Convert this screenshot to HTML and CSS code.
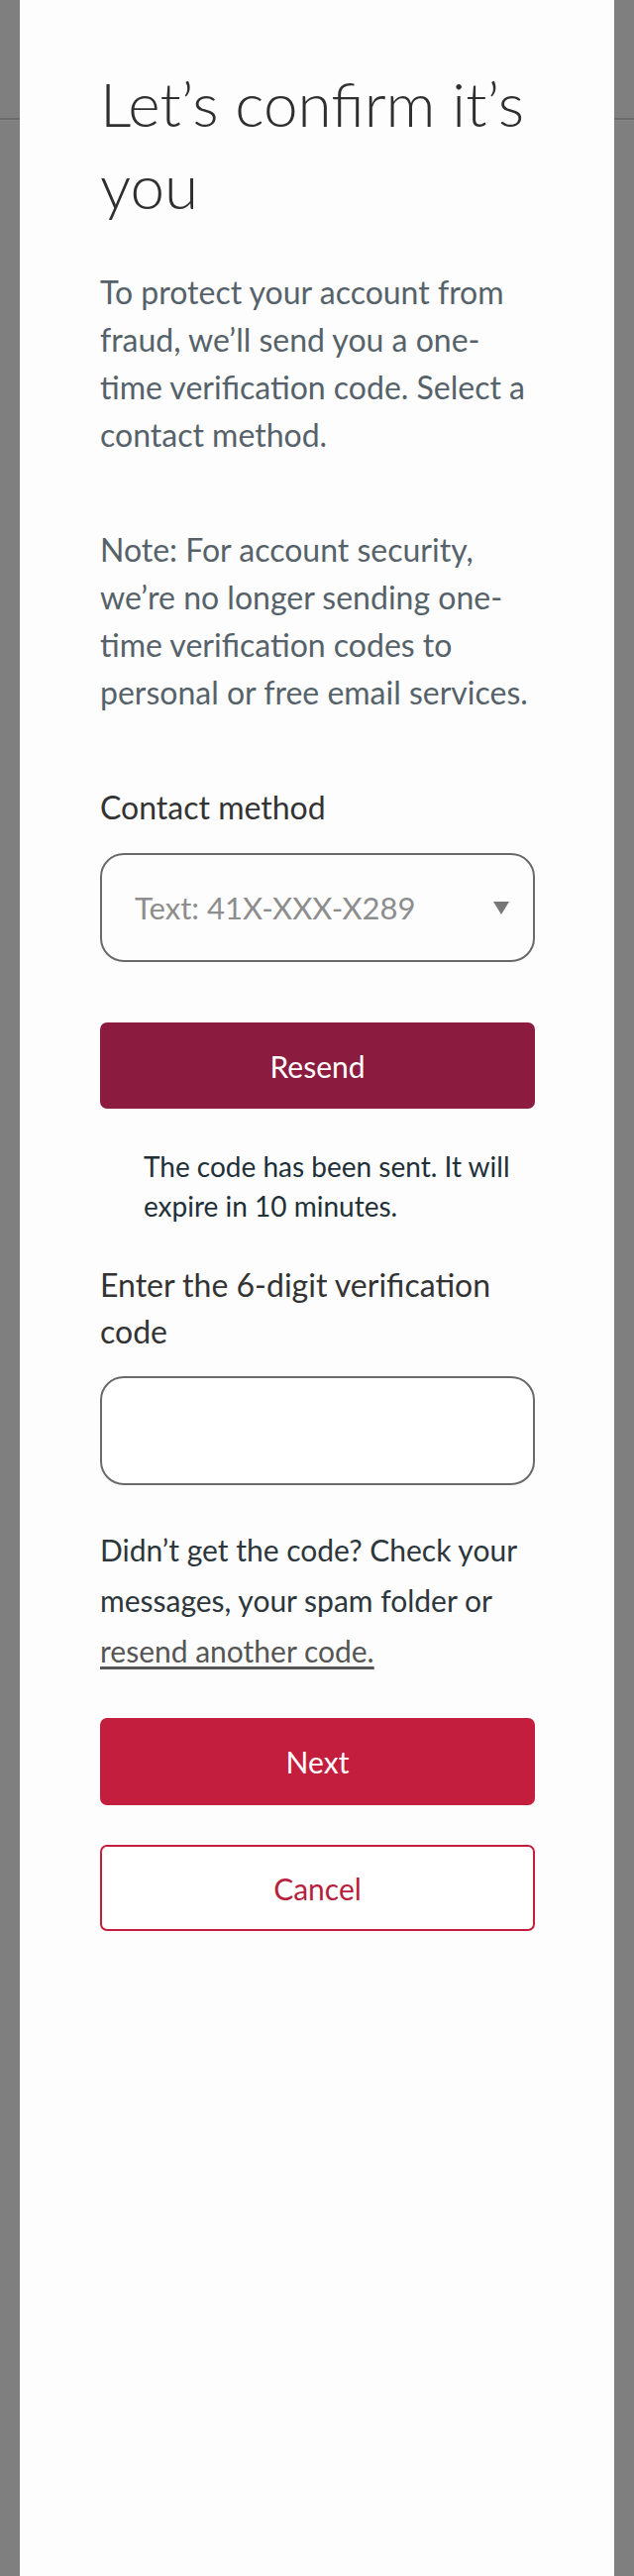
FILE: index.html
```html
<!DOCTYPE html>
<html lang="en">
<head>
<meta charset="utf-8">
<title>Let’s confirm it’s you</title>
<link rel="stylesheet" href="styles.css">
</head>
<body>
<div class="backdrop">
  <main class="panel">
    <h1 class="title">Let’s confirm it’s you</h1>
    <p class="intro">To protect your account from fraud, we’ll send you a one-time verification code. Select a contact method.</p>
    <p class="note">Note: For account security, we’re no longer sending one-time verification codes to personal or free email services.</p>

    <label class="field-label" for="method">Contact method</label>
    <div class="select">
      <span class="select-value" id="method">Text: 41X-XXX-X289</span>
      <span class="select-caret" aria-hidden="true"></span>
    </div>

    <button class="btn btn-resend" type="button">Resend</button>

    <p class="sent-msg">The code has been sent. It will expire in 10 minutes.</p>

    <label class="field-label field-label-code" for="code">Enter the 6-digit verification code</label>
    <input class="code-input" id="code" type="text">

    <p class="help">Didn’t get the code? Check your messages, your spam folder or <a class="help-link" href="#">resend another code.</a></p>

    <button class="btn btn-next" type="button">Next</button>
    <button class="btn btn-cancel" type="button">Cancel</button>
  </main>
</div>
</body>
</html>
```
FILE: styles.css
```css
html, body {
  margin: 0;
  padding: 0;
}
body {
  background-color: #7f7f7f;
  background-image: linear-gradient(to bottom, transparent 119px, #6b6b6b 119px, #6b6b6b 121px, #858585 121px, #858585 122px, transparent 122px);
  font-family: Lato, "Liberation Sans", sans-serif;
  min-height: 2600px;
}
.backdrop {
  padding: 0 20px;
}
.panel {
  background: #fdfdfd;
  min-height: 2600px;
  box-sizing: border-box;
  padding: 63px 80px 40px 81px;
  display: flex;
  flex-direction: column;
}
.title {
  margin: 0;
  font-weight: 300;
  font-size: 62px;
  line-height: 83px;
  color: #2f2f2f;
}
.intro, .note {
  margin: 42px 0 0;
  font-size: 32px;
  line-height: 48px;
  color: #56626a;
  font-weight: 400;
}
.note {
  margin-top: 68px;
}
.field-label {
  display: block;
  margin-top: 68px;
  font-size: 32px;
  line-height: 48px;
  color: #333;
}
.select {
  margin-top: 22px;
  height: 110px;
  box-sizing: border-box;
  border: 2px solid #6a6a6a;
  border-radius: 24px;
  display: flex;
  align-items: center;
  justify-content: space-between;
  padding: 0 24px 0 33px;
}
.select-value {
  font-size: 31px;
  color: #8d8d8d;
}
.select-caret {
  width: 0;
  height: 0;
  border-left: 8.5px solid transparent;
  border-right: 8.5px solid transparent;
  border-top: 13px solid #777;
}
.btn {
  display: block;
  width: 100%;
  box-sizing: border-box;
  border-radius: 7px;
  font-family: inherit;
  font-size: 30px;
  padding: 0;
  cursor: pointer;
}
.btn-resend {
  margin-top: 61px;
  height: 87px;
  border: none;
  background: #8b1c3f;
  color: #fff;
}
.sent-msg {
  margin: 38px 0 0;
  padding: 0 0 0 44px;
  font-size: 28px;
  line-height: 40px;
  color: #1f3038;
}
.field-label-code {
  margin-top: 36px;
  line-height: 47px;
}
.code-input {
  display: block;
  margin: 22px 0 0;
  width: 100%;
  height: 110px;
  box-sizing: border-box;
  border: 2px solid #6a6a6a;
  border-radius: 24px;
  background: #fff;
  font-family: inherit;
  font-size: 30px;
  padding: 0 33px;
}
.help {
  margin: 40px 0 0;
  font-size: 30px;
  line-height: 51px;
  color: #2c363b;
}
.help-link {
  color: #555;
  text-decoration: underline;
  text-underline-offset: 4px;
}
.btn-next {
  margin-top: 42px;
  height: 88px;
  border: none;
  background: #c41e3e;
  color: #fff;
}
.btn-cancel {
  margin-top: 40px;
  height: 87px;
  border: 2px solid #c41e3e;
  background: #fff;
  color: #b81f3e;
}
```
